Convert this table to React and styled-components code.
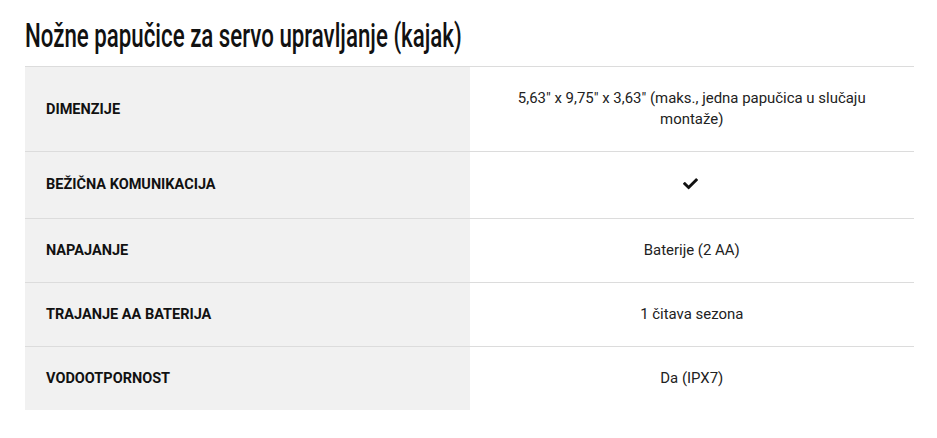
import React from "react";
import styled, { createGlobalStyle } from "styled-components";

const Global = createGlobalStyle`
  html, body { margin: 0; padding: 0; background: #fff; }
  body { font-family: Roboto, "Liberation Sans", sans-serif; color: #222; }
`;

const Page = styled.div`
  padding: 15px 23px 0 25px;
`;

const Title = styled.h2`
  margin: 0 0 11px;
  font-family: Roboto, "Liberation Sans", sans-serif;
  font-weight: 500;
  font-size: 34px;
  line-height: 40px;
  color: #111;
  white-space: nowrap;
  transform: scaleX(0.655);
  transform-origin: left center;
`;

const Table = styled.div`
  display: grid;
  grid-template-columns: 1fr 1fr;
  border-top: 1px solid #dcdcdc;
`;

const Label = styled.div`
  background: #f1f1f1;
  padding: 21px;
  font-weight: 700;
  font-size: 14.5px;
  line-height: 21px;
  color: #111;
  display: flex;
  align-items: center;
  border-bottom: ${(p) => (p.$last ? "none" : "1px solid #dcdcdc")};
`;

const Value = styled.div`
  padding: 21px 24px;
  font-size: 14.95px;
  line-height: 21px;
  color: #222;
  text-align: center;
  display: flex;
  align-items: center;
  justify-content: center;
  border-bottom: ${(p) => (p.$last ? "none" : "1px solid #dcdcdc")};
`;

const Check = styled.svg`
  width: 15px;
  height: 11.5px;
  display: block;
  margin: 5px 3px 7px 0;
`;

const CheckIcon = () => (
  <Check viewBox="0 64 512 384" aria-label="da">
    <path
      fill="#111"
      d="M173.898 439.404l-166.4-166.4c-9.997-9.997-9.997-26.206 0-36.204l36.203-36.204c9.997-9.998 26.207-9.998 36.204 0L192 312.69 432.095 72.596c9.997-9.997 26.207-9.997 36.204 0l36.203 36.204c9.997 9.997 9.997 26.206 0 36.204l-294.4 294.401c-9.998 9.997-26.207 9.997-36.204-.001z"
    />
  </Check>
);

const rows = [
  ["DIMENZIJE", "5,63\" x 9,75\" x 3,63\" (maks., jedna papučica u slučaju montaže)"],
  ["BEŽIČNA KOMUNIKACIJA", "check"],
  ["NAPAJANJE", "Baterije (2 AA)"],
  ["TRAJANJE AA BATERIJA", "1 čitava sezona"],
  ["VODOOTPORNOST", "Da (IPX7)"],
];

export default function App() {
  return (
    <Page>
      <Global />
      <Title>Nožne papučice za servo upravljanje (kajak)</Title>
      <Table>
        {rows.map(([k, v], i) => {
          const last = i === rows.length - 1;
          return (
            <React.Fragment key={k}>
              <Label $last={last}>{k}</Label>
              <Value $last={last}>{v === "check" ? <CheckIcon /> : <span>{v}</span>}</Value>
            </React.Fragment>
          );
        })}
      </Table>
    </Page>
  );
}
